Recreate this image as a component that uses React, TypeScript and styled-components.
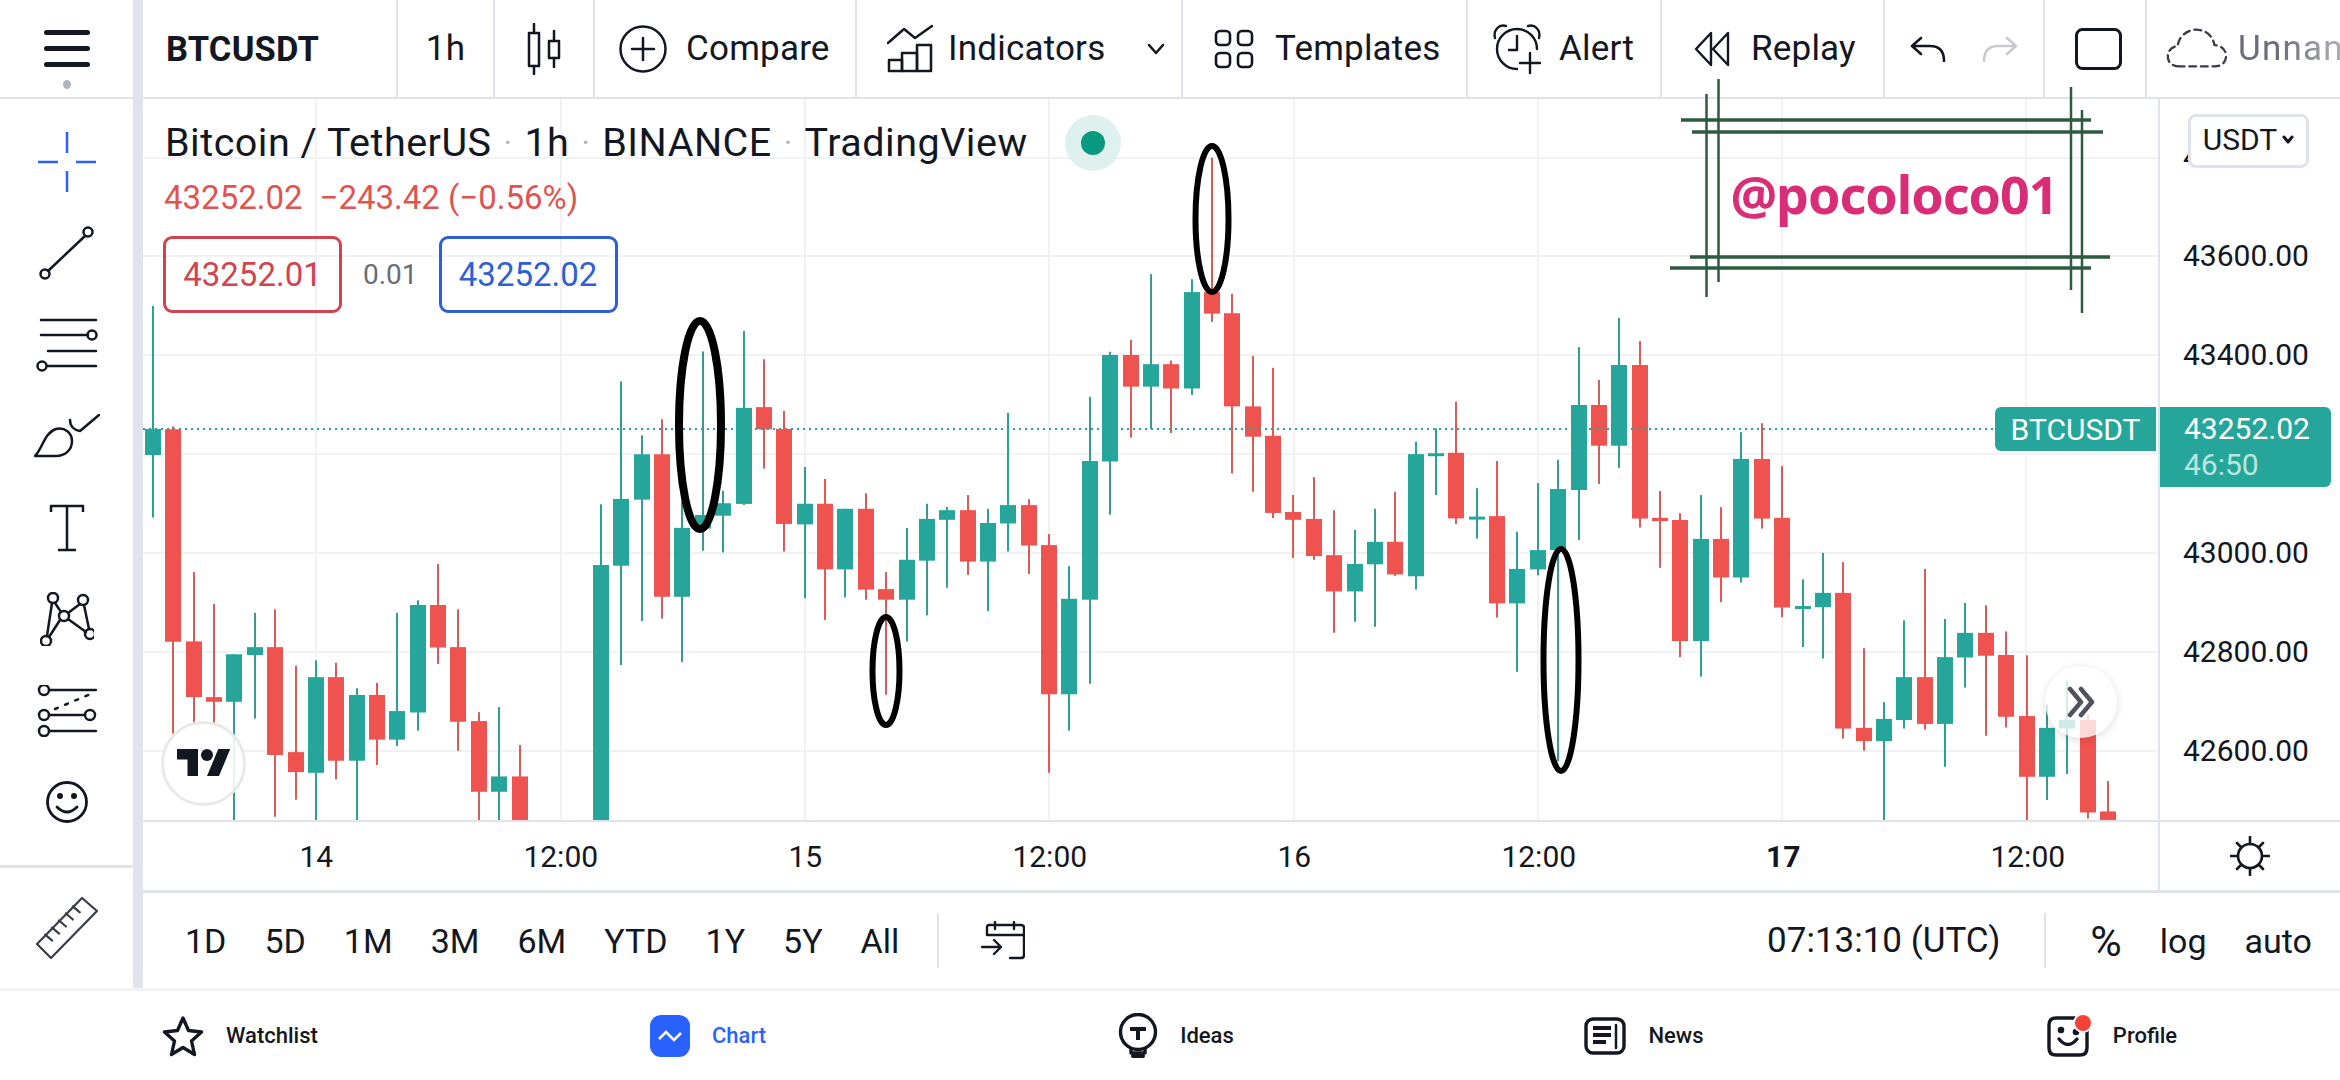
import React from 'react';
import styled, { createGlobalStyle } from 'styled-components';

const GREEN = '#26a69a';
const RED = '#ef5350';
const INK = '#131722';
const LINE = '#e0e3eb';
const GRID = '#f1f2f6';

const GlobalStyle = createGlobalStyle`
  html, body { margin: 0; padding: 0; background: #fff; }
  body { width: 2340px; height: 1080px; overflow: hidden; font-family: Roboto, "Liberation Sans", sans-serif; color: ${INK}; }
  * { box-sizing: border-box; }
`;

const Page = styled.div`
  position: relative;
  width: 2340px;
  height: 1080px;
  display: flex;
  flex-direction: column;
  overflow: hidden;
  background: #fff;
`;

const Workspace = styled.div`
  display: flex;
  height: 988px;
`;

const Rail = styled.aside`
  width: 133px;
  display: flex;
  flex-direction: column;
`;

const RailHeader = styled.div`
  height: 99px;
  border-bottom: 2px solid ${LINE};
  display: flex;
  flex-direction: column;
  align-items: center;
  padding-top: 30px;
  gap: 11px;
`;

const MenuBar = styled.span`
  width: 46px;
  height: 5px;
  border-radius: 3px;
  background: ${INK};
`;

const MenuDot = styled.span`
  width: 8px;
  height: 9px;
  margin-top: 2px;
  border-radius: 50%;
  background: #b2b5be;
`;

const RailTools = styled.div`
  height: 766px;
  padding-top: 17px;
  display: flex;
  flex-direction: column;
`;

const ToolSlot = styled.div`
  height: 91.5px;
  flex: none;
  display: flex;
  align-items: center;
  justify-content: center;
`;

const RailFooter = styled.div`
  flex: 1;
  border-top: 3px solid ${LINE};
  display: flex;
  align-items: center;
  justify-content: center;
`;

const Gutter = styled.div`
  width: 10px;
  background: ${LINE};
`;

const Center = styled.div`
  width: 2197px;
  display: flex;
  flex-direction: column;
`;

const TopBar = styled.header`
  height: 99px;
  border-bottom: 2px solid ${LINE};
  display: flex;
  overflow: hidden;
`;

const TopCell = styled.div<{ $w: number; $pad?: number; $gap?: number; $center?: boolean; $last?: boolean }>`
  width: ${(p) => p.$w}px;
  flex: none;
  height: 100%;
  display: flex;
  align-items: center;
  justify-content: ${(p) => (p.$center ? 'center' : 'flex-start')};
  padding-left: ${(p) => p.$pad ?? 0}px;
  gap: ${(p) => p.$gap ?? 0}px;
  font-size: 35px;
  letter-spacing: 0.2px;
  border-right: ${(p) => (p.$last ? 'none' : `2px solid ${LINE}`)};
`;

const Symbol = styled.span`
  font-weight: 700;
  font-size: 34.5px;
`;

const FadedName = styled.span`
  color: #6a6d78;
  white-space: nowrap;
  letter-spacing: 1.2px;
  -webkit-mask-image: linear-gradient(90deg, #000 25%, rgba(0, 0, 0, 0.15) 100%);
  mask-image: linear-gradient(90deg, #000 25%, rgba(0, 0, 0, 0.15) 100%);
`;

const Icon = styled.svg<{ $stroke?: number; $color?: string; $shift?: number }>`
  flex: none;
  display: block;
  fill: none;
  stroke: ${(p) => p.$color ?? INK};
  stroke-width: ${(p) => p.$stroke ?? 2.5};
  stroke-linecap: round;
  stroke-linejoin: round;
  margin-left: ${(p) => p.$shift ?? 0}px;
`;

const ChevronWrap = styled.span`
  margin-left: auto;
  margin-right: 16px;
  display: flex;
`;

const ChartRow = styled.div`
  height: 721px;
  display: flex;
`;

const ChartPane = styled.div`
  position: relative;
  width: 2015px;
  height: 100%;
  overflow: hidden;
`;

const ChartSvg = styled.svg`
  display: block;
  width: 100%;
  height: 100%;
`;

const Legend = styled.div`
  position: absolute;
  left: 22px;
  top: 16px;
  display: flex;
  flex-direction: column;
  align-items: flex-start;
`;

const TitleRow = styled.div`
  display: flex;
  align-items: center;
  gap: 12px;
  font-size: 39.5px;
  line-height: 54px;
  letter-spacing: 0.5px;
  white-space: nowrap;
`;

const Sep = styled.span`
  color: #b2b5be;
  font-size: 32px;
`;

const LiveDot = styled.span`
  width: 56px;
  height: 56px;
  margin-left: 25px;
  border-radius: 50%;
  background: #dff1ee;
  display: flex;
  align-items: center;
  justify-content: center;
  &::after {
    content: '';
    width: 24px;
    height: 24px;
    border-radius: 50%;
    background: #089981;
  }
`;

const ChangeRow = styled.div`
  margin-top: 5px;
  margin-left: -1px;
  display: flex;
  gap: 17px;
  font-size: 33px;
  line-height: 44px;
  color: #e0544f;
  white-space: pre;
`;

const QuoteRow = styled.div`
  margin-top: 16px;
  margin-left: -2px;
  display: flex;
  align-items: center;
  gap: 21px;
`;

const QuoteBox = styled.div<{ $color: string }>`
  width: 179px;
  height: 77px;
  border: 3px solid ${(p) => p.$color};
  border-radius: 9px;
  display: flex;
  align-items: center;
  justify-content: center;
  font-size: 33px;
  color: ${(p) => p.$color};
`;

const Spread = styled.span`
  font-size: 28px;
  color: #6a6d78;
`;

const LogoBadge = styled.div`
  position: absolute;
  left: 18px;
  top: 622px;
  width: 85px;
  height: 85px;
  border-radius: 50%;
  background: rgba(255, 255, 255, 0.88);
  border: 3px solid #e9e9ea;
  display: flex;
  align-items: center;
  justify-content: center;
`;

const ScrollButton = styled.div`
  position: absolute;
  left: 1902px;
  top: 567px;
  width: 72px;
  height: 72px;
  border-radius: 50%;
  background: rgba(255, 255, 255, 0.78);
  box-shadow: 0 2px 8px rgba(0, 0, 0, 0.14);
  display: flex;
  align-items: center;
  justify-content: center;
`;

const SymbolTag = styled.div`
  position: absolute;
  right: 2px;
  top: 308px;
  width: 161px;
  height: 44px;
  border-radius: 6px 0 0 6px;
  background: ${GREEN};
  color: #fff;
  font-size: 30px;
  display: flex;
  align-items: center;
  justify-content: center;
`;

const PriceAxis = styled.div`
  position: relative;
  width: 182px;
  border-left: 2px solid ${LINE};
  padding: 8px 0 0 23px;
  display: flex;
  flex-direction: column;
`;

const PriceLabel = styled.div`
  height: 99px;
  flex: none;
  display: flex;
  align-items: center;
  font-size: 30px;
`;

const CurrencyButton = styled.div`
  position: absolute;
  left: 28px;
  top: 15px;
  width: 121px;
  height: 54px;
  padding-bottom: 3px;
  border: 3px solid ${LINE};
  border-radius: 8px;
  background: #fff;
  display: flex;
  align-items: center;
  justify-content: center;
  gap: 5px;
  font-size: 30px;
`;

const PriceTag = styled.div`
  position: absolute;
  left: 0;
  top: 308px;
  width: 171px;
  height: 80px;
  border-radius: 0 6px 6px 0;
  background: ${GREEN};
  padding: 0 0 0 24px;
  font-size: 30px;
  line-height: 36px;
  color: #fff;
  display: flex;
  flex-direction: column;
  justify-content: center;
`;

const Countdown = styled.span`
  color: #b9e6df;
`;

const TimeRow = styled.div`
  height: 73px;
  border-top: 2px solid ${LINE};
  border-bottom: 3px solid ${LINE};
  display: flex;
`;

const TimeAxis = styled.div`
  width: 2015px;
  padding-left: 51px;
  display: flex;
  align-items: center;
`;

const TimeLabel = styled.span<{ $bold?: boolean }>`
  width: 244.5px;
  flex: none;
  text-align: center;
  font-size: 30px;
  font-weight: ${(p) => (p.$bold ? 700 : 400)};
`;

const SunCell = styled.div`
  flex: 1;
  border-left: 2px solid ${LINE};
  display: flex;
  align-items: center;
  justify-content: center;
`;

const RangeBar = styled.div`
  flex: 1;
  display: flex;
  align-items: center;
  padding-left: 42px;
  font-size: 34px;
`;

const RangeItem = styled.span`
  margin-right: 38px;
`;

const Divider = styled.span`
  width: 2px;
  height: 55px;
  background: ${LINE};
  flex: none;
`;

const RangeRight = styled.div`
  margin-left: auto;
  display: flex;
  align-items: center;
  padding-right: 28px;
`;

const Clock = styled.span`
  margin-right: 44px;
  font-size: 35px;
`;

const ScaleItem = styled.span<{ $gap: number; $big?: boolean }>`
  margin-left: ${(p) => p.$gap}px;
  font-size: ${(p) => (p.$big ? 43 : 34)}px;
`;

const BottomNav = styled.nav`
  flex: 1;
  border-top: 3px solid ${GRID};
  display: grid;
  grid-template-columns: repeat(5, 468px);
  padding-left: 6px;
`;

const NavItem = styled.div<{ $active?: boolean }>`
  display: flex;
  align-items: center;
  justify-content: center;
  gap: 22px;
  font-size: 22px;
  font-weight: 500;
  color: ${(p) => (p.$active ? '#2962ff' : INK)};
`;

const WatermarkBox = styled.div`
  position: absolute;
  left: 1670px;
  top: 79px;
  width: 440px;
  height: 234px;
  display: flex;
  align-items: center;
  justify-content: center;
  pointer-events: none;
`;

const WatermarkLines = styled.svg`
  position: absolute;
  inset: 0;
  stroke: #2d5a40;
`;

const WatermarkText = styled.span`
  position: relative;
  top: -3px;
  left: 4px;
  font-family: "Noto Sans", sans-serif;
  font-size: 52px;
  font-weight: 700;
  letter-spacing: -1px;
  color: #d92d77;
`;

// [wickTop, bodyTop, bodyBottom, wickBottom, colour], read off the zoomed crops, one crop scale per block
type Bar = [number, number, number, number, 'g' | 'r'];

const blockA: Bar[] = [
  [73, 417, 490, 665, 'g'], [410, 418, 1013, 1270, 'r'], [818, 1012, 1168, 1240, 'r'], [907, 1168, 1181, 1240, 'r'],
  [1048, 1048, 1181, 1512, 'g'], [932, 1028, 1050, 1228, 'g'], [922, 1028, 1330, 1503, 'r'], [1080, 1322, 1378, 1455, 'r'],
  [1065, 1112, 1380, 1512, 'g'], [1072, 1112, 1346, 1398, 'r'], [1143, 1162, 1346, 1512, 'g'], [1128, 1162, 1287, 1358, 'r'],
  [932, 1207, 1287, 1305, 'g'], [897, 910, 1211, 1262, 'g'], [795, 910, 1029, 1075, 'r'], [922, 1028, 1237, 1318, 'r'],
  [1210, 1235, 1433, 1512, 'r'], [1196, 1390, 1433, 1512, 'g'], [1302, 1390, 1512, 1512, 'r'],
  [3000, 3000, 3000, 3000, 'r'], [3000, 3000, 3000, 3000, 'r'], [3000, 3000, 3000, 3000, 'r'],
  [628, 798, 1512, 1512, 'g'], [284, 613, 800, 1078, 'g'], [435, 488, 615, 955, 'g'], [390, 488, 887, 948, 'r'],
  [620, 694, 887, 1070, 'g'], [200, 658, 696, 758, 'g'], [590, 625, 660, 763, 'g'], [143, 358, 627, 630, 'g'],
  [222, 356, 418, 528, 'r'],
];

const blockB: Bar[] = [
  [612, 651, 858, 918, 'r'], [734, 814, 859, 1020, 'g'], [760, 814, 957, 1067, 'r'], [825, 825, 957, 1018, 'g'],
  [791, 825, 1001, 1023, 'r'], [963, 1000, 1023, 1230, 'r'], [867, 936, 1023, 1114, 'g'], [814, 847, 938, 1057, 'g'],
  [821, 828, 849, 997, 'g'], [795, 828, 940, 969, 'r'], [825, 856, 940, 1048, 'g'], [616, 817, 857, 918, 'g'],
  [804, 817, 905, 967, 'r'], [880, 904, 1229, 1400, 'r'], [950, 1021, 1229, 1308, 'g'], [581, 721, 1023, 1206, 'g'],
  [483, 490, 722, 838, 'g'], [457, 490, 559, 670, 'r'], [314, 510, 559, 651, 'g'], [502, 510, 563, 660, 'r'],
  [325, 353, 563, 577, 'g'], [60, 353, 400, 418, 'r'], [357, 399, 602, 748, 'r'], [492, 602, 668, 788, 'r'],
  [518, 666, 834, 845, 'r'], [795, 832, 849, 932, 'r'], [756, 847, 928, 936, 'r'], [828, 926, 1005, 1095, 'r'],
  [871, 945, 1005, 1071, 'g'], [825, 897, 946, 1082, 'g'], [788, 897, 968, 971, 'r'], [679, 706, 972, 1001, 'g'],
  [650, 704, 707, 795, 'g'], [592, 703, 846, 858, 'r'], [780, 842, 846, 890, 'g'], [721, 841, 1031, 1062, 'r'],
  [875, 956, 1031, 1180, 'g'], [769, 915, 957, 970, 'g'], [718, 782, 915, 1375, 'g'],
];

const blockC: Bar[] = [
  [132, 294, 532, 672, 'g'], [224, 294, 408, 515, 'r'], [50, 182, 408, 470, 'g'], [115, 182, 612, 637, 'r'],
  [535, 610, 619, 750, 'r'], [597, 616, 955, 1000, 'r'], [546, 669, 955, 1055, 'g'], [580, 669, 777, 846, 'r'],
  [370, 445, 777, 791, 'g'], [345, 445, 612, 640, 'r'], [465, 610, 861, 888, 'r'], [782, 857, 861, 972, 'g'],
  [708, 820, 860, 1004, 'g'], [734, 820, 1200, 1228, 'r'], [975, 1198, 1235, 1262, 'r'], [1126, 1173, 1235, 1456, 'g'],
  [897, 1056, 1176, 1200, 'g'], [753, 1056, 1187, 1203, 'r'], [893, 1000, 1187, 1307, 'g'], [848, 932, 1001, 1085, 'g'],
  [855, 932, 996, 1220, 'r'], [928, 994, 1167, 1197, 'r'], [995, 1165, 1335, 1456, 'r'], [1132, 1198, 1335, 1400, 'g'],
  [1067, 1176, 1200, 1327, 'g'], [1160, 1176, 1435, 1452, 'r'], [1347, 1432, 1456, 1456, 'r'],
];

const rescale = (bars: Bar[], origin: number, scale: number): Bar[] =>
  bars.map(([a, b, c, d, col]) => [origin + a / scale, origin + b / scale, origin + c / scale, origin + d / scale, col]);

const candles: Bar[] = [...rescale(blockA, 280, 2.8), ...rescale(blockB, 130, 2.178), ...rescale(blockC, 300, 2.8)];

const GRID_Y = [158, 256, 355, 454, 553, 652, 751];
const GRID_X = [316, 561, 805, 1049, 1294, 1538, 1782, 2026];
const PRICES = ['43800.00', '43600.00', '43400.00', '43200.00', '43000.00', '42800.00', '42600.00'];
const TIMES = ['14', '12:00', '15', '12:00', '16', '12:00', '17', '12:00'];
const RANGES = ['1D', '5D', '1M', '3M', '6M', 'YTD', '1Y', '5Y', 'All'];
const MARKS = [
  { cx: 700, cy: 425, rx: 21, ry: 104, w: 8 },
  { cx: 1212, cy: 219, rx: 16.5, ry: 73, w: 6 },
  { cx: 886, cy: 671, rx: 13.5, ry: 54, w: 6 },
  { cx: 1561, cy: 660, rx: 17.5, ry: 111, w: 6 },
];

const Chart = () => (
  <ChartSvg viewBox="143 99 2015 721">
    {GRID_Y.map((y) => <rect key={y} x={143} y={y - 1} width={2015} height={2} fill={GRID} />)}
    {GRID_X.map((x) => <rect key={x} x={x - 1} y={99} width={2} height={721} fill={GRID} />)}
    {candles.map(([top, open, close, bottom, col], i) => {
      if (top > 900) return null;
      const x = Math.round(153 + i * 20.365);
      const up = col === 'g';
      return (
        <g key={i}>
          <rect x={x - 1} y={top} width={2} height={bottom - top} fill={up ? '#2f9f94' : '#dc5b57'} />
          <rect x={x - 8} y={open} width={16} height={Math.max(close - open, 3)} fill={up ? GREEN : RED} />
        </g>
      );
    })}
    <line x1={143} x2={1995} y1={429} y2={429} stroke={GREEN} strokeWidth={2} strokeDasharray="2 4" />
    {MARKS.map((m) => (
      <ellipse key={m.cx} cx={m.cx} cy={m.cy} rx={m.rx} ry={m.ry} fill="none" stroke="#000" strokeWidth={m.w} />
    ))}
  </ChartSvg>
);

const tools = [
  <Icon key="cross" width={60} height={62} viewBox="0 0 60 62" $stroke={2.5} $color="#2962ff">
    <path d="M30 1v21M30 40v21M1 31h20M39 31h20" strokeLinecap="butt" />
  </Icon>,
  <Icon key="trend" width={56} height={54} viewBox="0 0 56 54" $stroke={2.5}>
    <circle cx={49} cy={6} r={4.5} /><circle cx={6} cy={48} r={4.5} /><path d="M46 10L9 45" />
  </Icon>,
  <Icon key="fib" width={62} height={54} viewBox="0 0 62 54" $stroke={2.5}>
    <path d="M5 2h55M5 17h47M12 33h48M12 48h48" /><circle cx={56} cy={17} r={4.5} /><circle cx={6} cy={48} r={4.5} />
  </Icon>,
  <Icon key="brush" width={66} height={44} viewBox="0 0 66 44" $stroke={2.5}>
    <path d="M1 42C9 34 10 19 22 15C31 13 38 19 38 27C38 36 31 42 22 42Z" /><path d="M36 6C36 12 40 16 46 17L65 1" />
  </Icon>,
  <Icon key="text" width={36} height={48} viewBox="0 0 36 48" $stroke={2.5}>
    <path d="M2 8V2H34V8M18 2V46M9 46H27" strokeLinecap="butt" />
  </Icon>,
  <Icon key="pattern" width={54} height={54} viewBox="0 0 54 54" $stroke={2.5}>
    <circle cx={13} cy={6} r={5} /><circle cx={43} cy={8} r={5} /><circle cx={24} cy={24} r={5} /><circle cx={50} cy={42} r={5} /><circle cx={6} cy={49} r={5} />
    <path d="M15 11L21 20M12 11L7 44M9 45L20 28M28 21L40 12M44 13L49 37M28 27L46 40" />
  </Icon>,
  <Icon key="forecast" width={60} height={52} viewBox="0 0 60 52" $stroke={2.5}>
    <circle cx={7} cy={5} r={5} /><circle cx={7} cy={30} r={5} /><circle cx={53} cy={30} r={5} /><circle cx={7} cy={46} r={5} />
    <path d="M12 5H59M12 30H48M12 46H59" /><path d="M18 24L56 8" strokeDasharray="3 8" />
  </Icon>,
  <Icon key="smile" width={44} height={44} viewBox="0 0 44 44" $stroke={2.8}>
    <circle cx={22} cy={22} r={19.5} /><circle cx={15} cy={16} r={1.6} fill={INK} /><circle cx={29} cy={16} r={1.6} fill={INK} /><path d="M12 27Q22 37 32 27" />
  </Icon>,
];

const App: React.FC = () => (
  <Page>
    <GlobalStyle />
    <Workspace>
      <Rail>
        <RailHeader>
          <MenuBar /><MenuBar /><MenuBar /><MenuDot />
        </RailHeader>
        <RailTools>
          {tools.map((t, i) => <ToolSlot key={i}>{t}</ToolSlot>)}
        </RailTools>
        <RailFooter>
          <Icon width={62} height={62} viewBox="0 0 62 62" $stroke={2.2} $color="#3a3d47">
            <path d="M46 1L61 14L15 61L1 47Z" />
            <path d="M36.8 9.4L43.8 15.4M29.9 16.5L36.9 22.5M23 23.5L30 29.5M16.1 30.6L23.1 36.6M9.2 37.6L16.2 43.6" />
          </Icon>
        </RailFooter>
      </Rail>
      <Gutter />
      <Center>
        <TopBar>
          <TopCell $w={255} $pad={23}><Symbol>BTCUSDT</Symbol></TopCell>
          <TopCell $w={97} $center>1h</TopCell>
          <TopCell $w={100} $center>
            <Icon width={34} height={52} viewBox="0 0 34 52" $stroke={2.5}>
              <rect x={2} y={10} width={10} height={33} /><path d="M7 1v9M7 43v8" />
              <rect x={22} y={18} width={10} height={17} /><path d="M27 8v10M27 35v9" />
            </Icon>
          </TopCell>
          <TopCell $w={262} $pad={24} $gap={19}>
            <Icon width={48} height={48} viewBox="0 0 48 48" $stroke={2.5}>
              <circle cx={24} cy={24} r={22.5} /><path d="M24 13v22M13 24h22" />
            </Icon>
            Compare
          </TopCell>
          <TopCell $w={326} $pad={30} $gap={15}>
            <Icon width={46} height={50} viewBox="0 0 46 50" $stroke={2.5}>
              <path d="M1 19L17 5L28 14L45 2" />
              <rect x={2} y={36} width={13} height={11} /><rect x={15} y={29} width={15} height={18} /><rect x={30} y={21} width={14} height={26} />
            </Icon>
            Indicators
            <ChevronWrap>
              <Icon width={18} height={12} viewBox="0 0 18 12" $stroke={2.5}><path d="M2 2L9 10L16 2" /></Icon>
            </ChevronWrap>
          </TopCell>
          <TopCell $w={285} $pad={31} $gap={21}>
            <Icon width={40} height={40} viewBox="0 0 40 40" $stroke={2.6}>
              <rect x={2} y={2} width={14} height={14} rx={4} /><rect x={24} y={2} width={14} height={14} rx={4} />
              <rect x={2} y={24} width={14} height={14} rx={4} /><rect x={24} y={24} width={14} height={14} rx={4} />
            </Icon>
            Templates
          </TopCell>
          <TopCell $w={194} $pad={24} $gap={17}>
            <Icon width={50} height={52} viewBox="0 0 50 52" $stroke={2.4}>
              <path d="M25 46A20 20 0 1 1 45 26" /><path d="M25 13V27H17" /><path d="M3 15C1 7 7 1 14 3M36 3C43 1 49 7 47 15" />
              <path d="M38 30V50M28 40H48" />
            </Icon>
            Alert
          </TopCell>
          <TopCell $w={223} $pad={32} $gap={21}>
            <Icon width={36} height={36} viewBox="0 0 36 36" $stroke={2.4}>
              <path d="M17 2L2 18L17 34ZM34 2L19 18L34 34Z" />
            </Icon>
            Replay
          </TopCell>
          <TopCell $w={160} $pad={25} $gap={36}>
            <Icon width={36} height={26} viewBox="0 0 36 26" $stroke={2.6}>
              <path d="M11 2L2 10L11 18M3 10H20C29 10 34 15 34 25" />
            </Icon>
            <Icon width={36} height={26} viewBox="0 0 36 26" $stroke={2.6} $color="#c8cad0">
              <path d="M25 2L34 10L25 18M33 10H16C7 10 2 15 2 25" />
            </Icon>
          </TopCell>
          <TopCell $w={102} $pad={30}>
            <Icon width={47} height={42} viewBox="0 0 47 42" $stroke={3}>
              <rect x={1.5} y={1.5} width={44} height={39} rx={6} />
            </Icon>
          </TopCell>
          <TopCell $w={193} $pad={19} $gap={10} $last>
            <Icon width={62} height={42} viewBox="0 0 64 42" $stroke={2.4} $color="#3a3d47">
              <path d="M14 39C4 39 1 32 2 27C3 21 8 18 12 18C13 8 22 1 31 1C42 1 49 9 50 17C57 17 62 22 62 28C62 35 57 39 50 39Z" strokeDasharray="7 5" />
            </Icon>
            <FadedName>Unnamed</FadedName>
          </TopCell>
        </TopBar>
        <ChartRow>
          <ChartPane>
            <Chart />
            <Legend>
              <TitleRow>
                Bitcoin / TetherUS <Sep>·</Sep> 1h <Sep>·</Sep> BINANCE <Sep>·</Sep> TradingView
                <LiveDot />
              </TitleRow>
              <ChangeRow><span>43252.02</span><span>−243.42 (−0.56%)</span></ChangeRow>
              <QuoteRow>
                <QuoteBox $color="#d0434f">43252.01</QuoteBox>
                <Spread>0.01</Spread>
                <QuoteBox $color="#2f5fd0">43252.02</QuoteBox>
              </QuoteRow>
            </Legend>
            <LogoBadge>
              <svg width={54} height={42} viewBox="0 0 36 28" fill={INK}>
                <path d="M14 22H7V11H0V4h14v18zM28 22h-8l7.5-18h8L28 22z" /><circle cx={20} cy={8} r={4} />
              </svg>
            </LogoBadge>
            <ScrollButton>
              <Icon width={28} height={32} viewBox="0 0 28 32" $stroke={4.5} $color="#50535e">
                <path d="M3 3L14 16L3 29M14 3L25 16L14 29" />
              </Icon>
            </ScrollButton>
            <SymbolTag>BTCUSDT</SymbolTag>
          </ChartPane>
          <PriceAxis>
            {PRICES.map((p) => <PriceLabel key={p}>{p}</PriceLabel>)}
            <CurrencyButton>
              USDT
              <Icon width={12} height={9} viewBox="0 0 12 9" $stroke={3}><path d="M2 2L6 7L10 2" /></Icon>
            </CurrencyButton>
            <PriceTag>43252.02<Countdown>46:50</Countdown></PriceTag>
          </PriceAxis>
        </ChartRow>
        <TimeRow>
          <TimeAxis>
            {TIMES.map((t, i) => <TimeLabel key={i} $bold={t === '17'}>{t}</TimeLabel>)}
          </TimeAxis>
          <SunCell>
            <Icon width={40} height={40} viewBox="0 0 40 40" $stroke={2.6}>
              <circle cx={20} cy={20} r={12} />
              <path d="M20 1v7M20 32v7M1 20h7M32 20h7M7 7l4 4M29 29l4 4M33 7l-4 4M11 29l-4 4" />
            </Icon>
          </SunCell>
        </TimeRow>
        <RangeBar>
          {RANGES.map((r) => <RangeItem key={r}>{r}</RangeItem>)}
          <Divider />
          <Icon width={44} height={40} viewBox="0 0 44 40" $stroke={2.4} $shift={42}>
            <path d="M6 14V6Q6 4 8 4H40Q43 4 43 7V34Q43 37 40 37H29M6 14H43M14 1V8M33 1V8M1 26H20M13 19L20 26L13 33" />
          </Icon>
          <RangeRight>
            <Clock>07:13:10 (UTC)</Clock>
            <Divider />
            <ScaleItem $gap={44} $big>%</ScaleItem>
            <ScaleItem $gap={38}>log</ScaleItem>
            <ScaleItem $gap={38}>auto</ScaleItem>
          </RangeRight>
        </RangeBar>
      </Center>
    </Workspace>
    <BottomNav>
      <NavItem>
        <Icon width={42} height={42} viewBox="0 0 42 42" $stroke={3.4}>
          <path d="M21 3L26.5 15.5L39.5 17L29.5 26L32.5 39.5L21 32.5L9.5 39.5L12.5 26L2.5 17L15.5 15.5Z" />
        </Icon>
        Watchlist
      </NavItem>
      <NavItem $active>
        <svg width={40} height={42} viewBox="0 0 40 42">
          <rect width={40} height={42} rx={11} fill="#2962ff" />
          <path d="M9 24L16 17L24 25L31 18" fill="none" stroke="#fff" strokeWidth={2.6} />
        </svg>
        Chart
      </NavItem>
      <NavItem>
        <Icon width={40} height={46} viewBox="0 0 40 46" $stroke={3.4}>
          <circle cx={20} cy={19} r={17.5} />
          <path d="M12 16H28M20 16V27" strokeWidth={4} strokeLinecap="butt" />
          <path d="M13 36V40H27V36" /><path d="M15 43H25" strokeWidth={4} />
        </Icon>
        Ideas
      </NavItem>
      <NavItem>
        <Icon width={42} height={38} viewBox="0 0 42 38" $stroke={3.4}>
          <rect x={2} y={2} width={38} height={34} rx={7} />
          <path d="M9 11H27M9 18H27M9 25H22" strokeWidth={4} strokeLinecap="butt" /><path d="M32 8V31" strokeWidth={2.5} />
        </Icon>
        News
      </NavItem>
      <NavItem>
        <Icon width={44} height={44} viewBox="0 0 44 44" $stroke={3.4}>
          <path d="M28 4H9Q2 4 2 11V34Q2 41 9 41H33Q40 41 40 34V16" />
          <circle cx={14} cy={16} r={1.6} fill={INK} /><circle cx={29} cy={18} r={1.6} fill={INK} />
          <path d="M12 25Q21 36 30 25" />
          <circle cx={36} cy={9} r={9} fill="#f44336" stroke="#fff" strokeWidth={2} />
        </Icon>
        Profile
      </NavItem>
    </BottomNav>
    <WatermarkBox>
      <WatermarkLines width={440} height={234} viewBox="1670 79 440 234">
        <path d="M1681 120H2091M1692 132H2103M1690 257H2110M1670 268H2091" strokeWidth={3.5} />
        <path d="M1706.5 94V297M1718.5 79V282M2071 87V290M2082 110V313" strokeWidth={2.5} />
      </WatermarkLines>
      <WatermarkText>@pocoloco01</WatermarkText>
    </WatermarkBox>
  </Page>
);

export default App;
